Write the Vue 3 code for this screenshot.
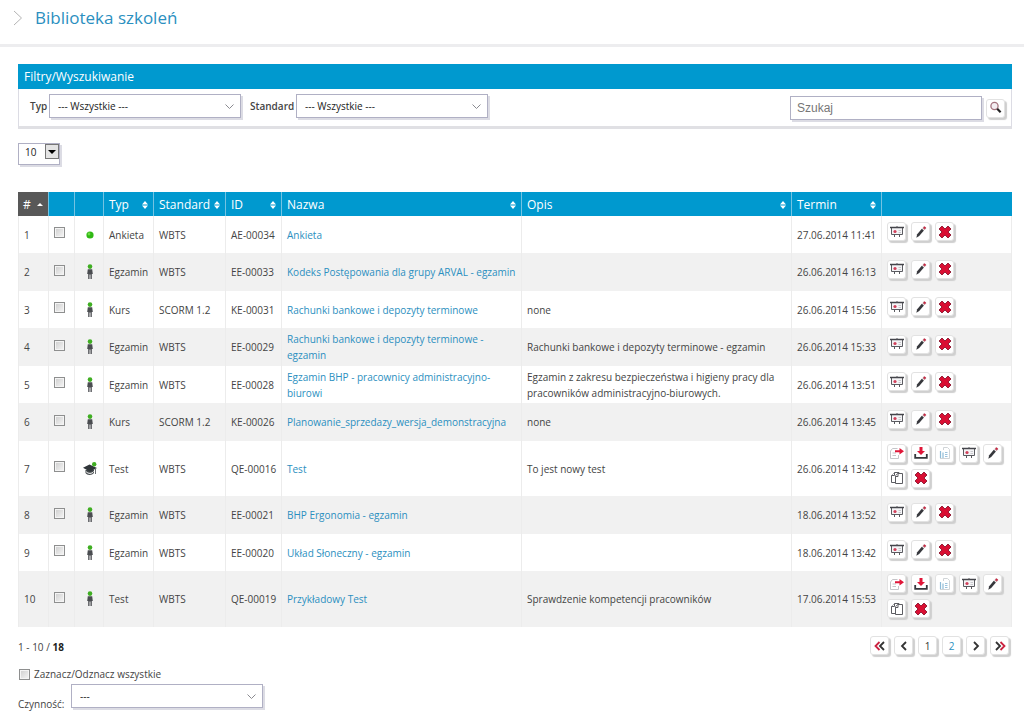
<script setup>
import { ref } from 'vue'

const short = ['show', 'edit', 'remove']
const full = ['send', 'download', 'report', 'show', 'edit', 'copy', 'remove']
const titles = {
  send: 'Przekaż',
  download: 'Pobierz',
  report: 'Raport',
  show: 'Podgląd',
  edit: 'Edytuj',
  copy: 'Kopiuj',
  remove: 'Usuń',
}

const columns = [
  { key: 'nr', label: '#', sort: 'asc' },
  { key: 'check', label: '' },
  { key: 'icon', label: '' },
  { key: 'type', label: 'Typ', sort: 'both' },
  { key: 'standard', label: 'Standard', sort: 'both' },
  { key: 'id', label: 'ID', sort: 'both' },
  { key: 'name', label: 'Nazwa', sort: 'both' },
  { key: 'desc', label: 'Opis', sort: 'both' },
  { key: 'date', label: 'Termin', sort: 'both' },
  { key: 'actions', label: '' },
]

const rows = [
  { nr: 1, icon: 'dot', type: 'Ankieta', standard: 'WBTS', id: 'AE-00034', name: 'Ankieta', desc: '', date: '27.06.2014 11:41', actions: short },
  { nr: 2, icon: 'person', type: 'Egzamin', standard: 'WBTS', id: 'EE-00033', name: 'Kodeks Postępowania dla grupy ARVAL - egzamin', desc: '', date: '26.06.2014 16:13', actions: short },
  { nr: 3, icon: 'person', type: 'Kurs', standard: 'SCORM 1.2', id: 'KE-00031', name: 'Rachunki bankowe i depozyty terminowe', desc: 'none', date: '26.06.2014 15:56', actions: short },
  { nr: 4, icon: 'person', type: 'Egzamin', standard: 'WBTS', id: 'EE-00029', name: 'Rachunki bankowe i depozyty terminowe - egzamin', desc: 'Rachunki bankowe i depozyty terminowe - egzamin', date: '26.06.2014 15:33', actions: short },
  { nr: 5, icon: 'person', type: 'Egzamin', standard: 'WBTS', id: 'EE-00028', name: 'Egzamin BHP - pracownicy administracyjno-biurowi', desc: 'Egzamin z zakresu bezpieczeństwa i higieny pracy dla pracowników administracyjno-biurowych.', date: '26.06.2014 13:51', actions: short },
  { nr: 6, icon: 'person', type: 'Kurs', standard: 'SCORM 1.2', id: 'KE-00026', name: 'Planowanie_sprzedazy_wersja_demonstracyjna', desc: 'none', date: '26.06.2014 13:45', actions: short },
  { nr: 7, icon: 'cap', type: 'Test', standard: 'WBTS', id: 'QE-00016', name: 'Test', desc: 'To jest nowy test', date: '26.06.2014 13:42', actions: full },
  { nr: 8, icon: 'person', type: 'Egzamin', standard: 'WBTS', id: 'EE-00021', name: 'BHP Ergonomia - egzamin', desc: '', date: '18.06.2014 13:52', actions: short },
  { nr: 9, icon: 'person', type: 'Egzamin', standard: 'WBTS', id: 'EE-00020', name: 'Układ Słoneczny - egzamin', desc: '', date: '18.06.2014 13:42', actions: short },
  { nr: 10, icon: 'person', type: 'Test', standard: 'WBTS', id: 'QE-00019', name: 'Przykładowy Test', desc: 'Sprawdzenie kompetencji pracowników', date: '17.06.2014 15:53', actions: full },
]

const search = ref('')
</script>

<template>
  <div class="page">
    <header class="title-bar">
      <svg class="title-arrow" width="10" height="16" viewBox="0 0 10 16" aria-hidden="true">
        <path d="M1 1 L8.5 8 L1 15" fill="none" stroke="#b4b4b4" />
      </svg>
      <h1>Biblioteka szkoleń</h1>
    </header>

    <main>
      <section class="filters">
        <h2>Filtry/Wyszukiwanie</h2>
        <form class="filter-row" @submit.prevent>
          <label for="f-type">Typ</label>
          <span class="pick">
            <select id="f-type"><option>--- Wszystkie ---</option></select>
            <svg width="9" height="6" viewBox="0 0 9 6" aria-hidden="true"><path d="M0.5 0.5 L4.5 4.5 L8.5 0.5" /></svg>
          </span>
          <label for="f-standard" class="next">Standard</label>
          <span class="pick">
            <select id="f-standard"><option>--- Wszystkie ---</option></select>
            <svg width="9" height="6" viewBox="0 0 9 6" aria-hidden="true"><path d="M0.5 0.5 L4.5 4.5 L8.5 0.5" /></svg>
          </span>
          <div class="search">
            <input v-model="search" type="text" placeholder="Szukaj" aria-label="Szukaj" />
            <button class="tile" type="submit" aria-label="Szukaj">
              <svg width="14" height="14" viewBox="0 0 14 14">
                <circle cx="5.5" cy="5" r="3.6" fill="#f3eef2" stroke="#a5747f" stroke-width="1.3" />
                <path d="M8.2 7.8 L11.6 11.2" stroke="#222" stroke-width="2.2" />
              </svg>
            </button>
          </div>
        </form>
      </section>

      <span class="count">
        <select aria-label="Liczba wierszy"><option>10</option></select>
        <span class="count-arrow" aria-hidden="true">
          <svg width="8" height="4" viewBox="0 0 8 4"><path d="M0 0 H8 L4 4 Z" /></svg>
        </span>
      </span>

      <table>
        <colgroup>
          <col v-for="c in columns" :key="c.key" :class="'w-' + c.key" />
        </colgroup>
        <thead>
          <tr>
            <th v-for="c in columns" :key="c.key" scope="col" :class="{ sorted: c.sort === 'asc' }">
              <button v-if="c.sort" type="button" class="sort">
                <span>{{ c.label }}</span>
                <svg v-if="c.sort === 'asc'" width="6" height="8" viewBox="0 0 6 8"><path d="M0 5 L3 2 L6 5 Z" /></svg>
                <svg v-else width="6" height="8" viewBox="0 0 6 8"><path d="M0 3.4 L3 0 L6 3.4 Z M0 4.6 L3 8 L6 4.6 Z" /></svg>
              </button>
            </th>
          </tr>
        </thead>
        <tbody>
          <tr v-for="r in rows" :key="r.nr" :class="{ tall: r.actions.length > 3 }">
            <td>{{ r.nr }}</td>
            <td class="check"><input type="checkbox" :aria-label="'Zaznacz ' + r.name" /></td>
            <td class="kind">
              <svg v-if="r.icon === 'dot'" width="16" height="16" viewBox="0 0 16 16">
                <circle cx="8" cy="8" r="3.6" fill="#2fb814" />
                <circle cx="7" cy="7" r="1.4" fill="#6cdb45" />
              </svg>
              <svg v-else-if="r.icon === 'person'" width="16" height="16" viewBox="0 0 16 16">
                <circle cx="8" cy="2.6" r="2.3" fill="#3fae22" />
                <path d="M5.8 5.2 H10.2 L10.8 10 H9.8 V15 H8.5 V10.5 H7.5 V15 H6.2 V10 H5.2 Z" fill="#4a4c50" />
              </svg>
              <svg v-else width="16" height="16" viewBox="0 0 16 16">
                <path d="M3.5 9 V12 C5 14.5 10 14.5 12 12 V9" fill="#43484b" />
                <path d="M4 10.5 C6 13 10 13 12 10.3" fill="none" stroke="#fff" />
                <path d="M1 6.8 L7.5 3.5 L15 7 L8 10.7 Z" fill="#30363a" />
                <path d="M13.5 7 V13" stroke="#6b6f72" />
                <circle cx="12.2" cy="3.3" r="2.2" fill="#3fae22" />
              </svg>
            </td>
            <td>{{ r.type }}</td>
            <td>{{ r.standard }}</td>
            <td class="line">{{ r.id }}</td>
            <td><a href="#">{{ r.name }}</a></td>
            <td>{{ r.desc }}</td>
            <td class="line">{{ r.date }}</td>
            <td class="actions">
              <div>
                <button v-for="a in r.actions" :key="a" class="tile" type="button" :aria-label="titles[a] + ' ' + r.name">
                  <svg width="14" height="14" viewBox="0 0 14 14">
                    <g v-if="a === 'show'" fill="none" stroke="#5a5b60">
                      <path d="M1.5 3 V9.5 H12.5 V3" fill="#f4f4f6" />
                      <path d="M0 2.5 H14" stroke="#44454b" stroke-width="1.5" />
                      <path d="M7 1 V2.5 M4.5 9.5 V12 M9.5 9.5 V12" />
                      <path d="M8.5 5.5 H11 M8.5 7.5 H11" stroke="#c9c9ce" />
                      <circle cx="5" cy="6.5" r="1.6" fill="#d0405a" stroke="none" />
                    </g>
                    <g v-else-if="a === 'edit'">
                      <path d="M2.3 12.8 L3.2 9.2 L7.8 3.8 L9.9 5.6 L5.2 11 Z" fill="#36373c" />
                      <path d="M8.4 3.2 L10.2 1 L12.4 3 L10.6 5 Z" fill="#b98089" />
                      <circle cx="10.7" cy="2.8" r="1" fill="#d0203e" />
                    </g>
                    <path v-else-if="a === 'remove'" d="M4 1 L7 4 L10 1 L13 4 L10 7 L13 10 L10 13 L7 10 L4 13 L1 10 L4 7 L1 4 Z" fill="#d90f33" stroke="#96223a" />
                    <g v-else-if="a === 'send'">
                      <path d="M7.5 2.5 H2.5 L0.5 5 V12.5 H8.5 V9" fill="#fff" stroke="#c5c5c9" />
                      <path d="M2.5 7 H6 M2.5 9.5 H6" stroke="#c5c5c9" />
                      <path d="M5 4.2 H9.5 V2 L14 5.2 L9.5 8.4 V6.2 H5 Z" fill="#e01638" />
                    </g>
                    <g v-else-if="a === 'download'">
                      <path d="M5.5 1 H8.5 V5 H11 L7 9 L3 5 H5.5 Z" fill="#e01638" />
                      <path d="M1.2 8 V11.8 H12.8 V8" fill="none" stroke="#37383d" stroke-width="1.8" />
                    </g>
                    <g v-else-if="a === 'report'" fill="none">
                      <path d="M5.5 4 V1.5 H9.5 L11.5 3.5 V12.5 H2" stroke="#d0d4d7" />
                      <path d="M2.5 5 V12 M5 6.5 V12" stroke="#8fbcd8" stroke-width="1.2" />
                      <path d="M7 6.5 H9.5 M7 8.5 H9.5 M7 10.5 H9.5" stroke="#9bc2dc" />
                    </g>
                    <g v-else fill="#fff" stroke="#5c5d62">
                      <path d="M4.5 1.5 H9 V11.5 H1.5 V4.5 Z" />
                      <path d="M1.5 4.5 H4.5 V1.5" />
                      <path d="M7.5 2.5 H12.5 V12.5 H5.5 V5 Z" />
                      <path d="M5.5 5.5 H8 V2.5" />
                    </g>
                  </svg>
                </button>
              </div>
            </td>
          </tr>
        </tbody>
      </table>

      <div class="summary">
        <span>1 - 10 / <b>18</b></span>
        <nav aria-label="Strony">
          <button class="tile" type="button" aria-label="Pierwsza">
            <svg width="14" height="14" viewBox="0 0 14 14"><path class="red" d="M6.5 3 L2.5 7 L6.5 11" /><path d="M11 3 L7 7 L11 11" /></svg>
          </button>
          <button class="tile" type="button" aria-label="Poprzednia">
            <svg width="14" height="14" viewBox="0 0 14 14"><path d="M9 3 L5 7 L9 11" /></svg>
          </button>
          <button class="tile" type="button">1</button>
          <button class="tile other" type="button">2</button>
          <button class="tile" type="button" aria-label="Następna">
            <svg width="14" height="14" viewBox="0 0 14 14"><path d="M5 3 L9 7 L5 11" /></svg>
          </button>
          <button class="tile" type="button" aria-label="Ostatnia">
            <svg width="14" height="14" viewBox="0 0 14 14"><path d="M3 3 L7 7 L3 11" /><path class="red" d="M7.5 3 L11.5 7 L7.5 11" /></svg>
          </button>
        </nav>
      </div>

      <label class="all"><input type="checkbox" />Zaznacz/Odznacz wszystkie</label>
      <div class="operation">
        <label for="operation">Czynność:</label>
        <span class="pick">
          <select id="operation"><option>---</option></select>
          <svg width="9" height="6" viewBox="0 0 9 6" aria-hidden="true"><path d="M0.5 0.5 L4.5 4.5 L8.5 0.5" /></svg>
        </span>
      </div>
    </main>
  </div>
</template>

<style>
body {
  background: #fff;
}
</style>

<style scoped>
.page {
  font: 10px/16px "Open Sans", "Noto Sans", sans-serif;
  color: #444;
}
.page * {
  box-sizing: border-box;
}
button,
input,
select {
  font: inherit;
  margin: 0;
}
svg {
  display: block;
  flex: none;
}
.title-bar {
  display: flex;
  align-items: center;
  gap: 12px;
  height: 47px;
  padding: 0 13px 8px;
  border-bottom: 3px solid #ededef;
}
h1 {
  margin: 0;
  font-size: 17px;
  line-height: 24px;
  font-weight: 400;
  color: #2b8fc0;
}
main {
  padding: 17px 12px 0 18px;
}
.filters {
  border: 1px solid #dcdce4;
  border-top: 0;
  border-bottom: 3px solid #e0e0e4;
}
h2 {
  margin: 0 -1px;
  padding: 0 6px;
  background: #0099cf;
  color: #fff;
  font-size: 12px;
  line-height: 25px;
  font-weight: 400;
}
.filter-row {
  display: flex;
  align-items: flex-start;
  height: 37px;
  padding: 5px 6px 0 11px;
}
.filter-row label {
  width: 19px;
  line-height: 24px;
  font-weight: 600;
}
.filter-row .next {
  width: 46px;
  margin-left: 9px;
}
.pick {
  position: relative;
  display: block;
  width: 192px;
  height: 24px;
}
.pick select {
  appearance: none;
  width: 100%;
  height: 100%;
  padding: 0 24px 0 8px;
  border: 1px solid #b0b0c4;
  border-radius: 0;
  background: #fff;
  box-shadow: 2px 2px 0 #dcdce4;
  color: #222;
}
.pick svg {
  position: absolute;
  right: 7px;
  top: 10px;
  pointer-events: none;
  fill: none;
  stroke: #8a8a90;
}
.search {
  display: flex;
  align-items: center;
  gap: 4px;
  margin: 2px 0 0 auto;
}
.search input {
  width: 192px;
  height: 24px;
  padding: 0 6px;
  border: 1px solid #b0b0c4;
  box-shadow: 2px 2px 0 #dcdce4;
  font: 12px/16px "Liberation Sans", Arial, sans-serif;
}
.search input::placeholder {
  color: #777;
}
.tile {
  display: flex;
  align-items: center;
  justify-content: center;
  width: 19px;
  height: 19px;
  padding: 0;
  border: 1px solid #e2e2e2;
  border-radius: 3px;
  background: #fff;
  box-shadow: 2px 2px 1px #cfcfcf;
  color: #333;
}
.count {
  position: relative;
  display: block;
  width: 42px;
  height: 22px;
  margin: 14px 0 27px;
}
.count select {
  appearance: none;
  width: 100%;
  height: 100%;
  padding: 0 6px 4px;
  border: 1px solid #b0b0c4;
  border-radius: 0;
  background: #fff;
  box-shadow: 2px 2px 0 #dcdce4;
  color: #222;
}
.count-arrow {
  position: absolute;
  top: 1px;
  right: 1px;
  display: grid;
  place-items: center;
  width: 14px;
  height: 15px;
  border: 1px solid #777;
  background: #e4e4e4;
  pointer-events: none;
}
table {
  width: 100%;
  table-layout: fixed;
  border-collapse: separate;
  border-spacing: 0;
}
.w-nr { width: 31px; }
.w-check { width: 26px; }
.w-icon { width: 29px; }
.w-type { width: 50px; }
.w-standard { width: 72px; }
.w-id { width: 56px; }
.w-name { width: 240px; }
.w-date { width: 90px; }
.w-actions { width: 130px; }
th {
  height: 24px;
  padding: 0;
  background: #0099cf;
  border-right: 1px solid #74c3e2;
  font-weight: 400;
}
th:last-child {
  border-right: 0;
}
.sorted {
  background: #585858;
}
.sort {
  display: flex;
  align-items: center;
  justify-content: space-between;
  width: 100%;
  padding: 2px 5px 0;
  border: 0;
  background: none;
  color: #fff;
  font-size: 12px;
  line-height: 22px;
}
.sort svg {
  fill: #fff;
}
td {
  height: 37px;
  padding: 0 5px;
  border-right: 1px solid #ececec;
  vertical-align: middle;
}
td:first-child {
  border-left: 1px solid #ececec;
}
tr:nth-child(even) td {
  height: 38px;
  background: #f1f1f1;
}
.tall td {
  height: 55px;
}
tr.tall:nth-child(even) td {
  height: 56px;
}
.line {
  white-space: nowrap;
}
a {
  color: #2b8fc0;
  text-decoration: none;
}
input[type="checkbox"] {
  appearance: none;
  display: block;
  flex: none;
  width: 11px;
  height: 11px;
  border: 1px solid #8e8f8f;
  background: linear-gradient(135deg, #cdcdcd, #f6f6f6);
  box-shadow: inset 0 0 0 1px #f4f4f4;
}
input[type="checkbox"]:checked {
  background: #0099cf;
}
td.check {
  padding-bottom: 4px;
}
td.kind {
  padding: 0 7px;
}
td.actions {
  padding: 0 5px 6px;
}
.actions > div {
  display: flex;
  flex-wrap: wrap;
  gap: 6px 5px;
}
.summary {
  display: flex;
  align-items: center;
  justify-content: space-between;
  height: 39px;
}
.summary b {
  color: #222;
}
nav {
  display: flex;
  gap: 5px;
  padding: 0 3px 2px 0;
}
nav path {
  fill: none;
  stroke: #333;
  stroke-width: 1.8;
}
nav .red {
  stroke: #cc2340;
}
nav .other {
  color: #2b8fc0;
}
.all {
  display: flex;
  align-items: center;
  gap: 4px;
  padding: 0 1px;
}
.operation {
  display: flex;
  align-items: flex-start;
  padding-top: 2px;
}
.operation label {
  width: 53px;
  padding-top: 12px;
}
</style>
